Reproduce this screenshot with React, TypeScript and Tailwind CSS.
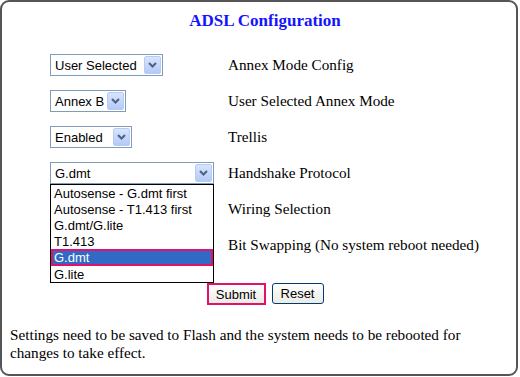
import type { ReactNode } from 'react'

const serif = "font-['Liberation_Serif','Times_New_Roman',serif]"
const sans = "font-['Liberation_Sans',Arial,sans-serif]"

function Chevron() {
  return (
    <svg width="9" height="6" viewBox="0 0 9 6" className="block">
      <path d="M1 1L4.5 4.5L8 1" stroke="#4d6185" strokeWidth="2" fill="none" />
    </svg>
  )
}

// XP style closed select box
function SelectBox({ value, width }: { value: string; width: string }) {
  return (
    <div className={`${width} h-[22px] border border-[#7f9db9] bg-white flex items-center justify-between pl-[4px] pr-[1px] ${sans} text-[13px] text-black`}>
      <span className="leading-none">{value}</span>
      <div className="w-[17px] h-[18px] rounded-[2px] border border-[#b8ccf3] bg-gradient-to-b from-[#d9e5fd] to-[#b4c9f7] flex items-center justify-center">
        <Chevron />
      </div>
    </div>
  )
}

function Row({ children, label }: { children?: ReactNode; label: string }) {
  return (
    <div className="flex items-center h-[36px]">
      <div className="w-[178px] shrink-0 relative">{children}</div>
      <span className={`${serif} text-[15.2px] text-black`}>{label}</span>
    </div>
  )
}

const protocols = [
  'Autosense - G.dmt first',
  'Autosense - T1.413 first',
  'G.dmt/G.lite',
  'T1.413',
  'G.dmt',
  'G.lite',
]

export default function App() {
  return (
    <div className="w-[520px] h-[377px] bg-white">
      <div className="w-[518px] h-[376px] border-2 border-[#555555] rounded-[9px] flex flex-col">
        {/* Title */}
        <div className={`${serif} text-[17px] font-bold text-[#1414ff] text-center pl-[12px] pt-[6px] h-[45px]`}>
          ADSL Configuration
        </div>

        {/* Settings rows */}
        <div className="pl-[48px]">
          <Row label="Annex Mode Config">
            <SelectBox value="User Selected" width="w-[113px]" />
          </Row>
          <Row label="User Selected Annex Mode">
            <SelectBox value="Annex B" width="w-[76px]" />
          </Row>
          <Row label="Trellis">
            <SelectBox value="Enabled" width="w-[82px]" />
          </Row>
          <Row label="Handshake Protocol">
            <SelectBox value="G.dmt" width="w-[164px]" />
            {/* open dropdown list, covers the next two selects */}
            <div className={`absolute left-0 top-[22px] w-[164px] border border-black bg-white z-10 ${sans} text-[13px] text-black`}>
              {protocols.map((p, i) =>
                i === 4 ? (
                  <div key={p} className="h-[17px] border-2 border-[#e0126e] bg-[#316ac5] text-white pl-[1px] flex items-center leading-none">
                    {p}
                  </div>
                ) : (
                  <div key={p} className="h-[16px] pl-[3px] flex items-center leading-none">
                    {p}
                  </div>
                ),
              )}
            </div>
          </Row>
          <Row label="Wiring Selection" />
          <Row label="Bit Swapping (No system reboot needed)" />
        </div>

        {/* Buttons */}
        <div className={`flex justify-center gap-[6px] pl-[12px] mt-[20px] ${sans} text-[13px]`}>
          <button className="w-[59px] h-[22px] border-2 border-[#e0126e] bg-gradient-to-b from-[#fefefe] to-[#ecebe4] text-black leading-none">
            Submit
          </button>
          <button className="w-[52px] h-[21px] border border-[#003c74] rounded-[3px] bg-gradient-to-b from-[#fefefe] to-[#ecebe4] text-black leading-none">
            Reset
          </button>
        </div>

        {/* Footer note */}
        <p className={`${serif} text-[15.2px] leading-[18px] text-black pl-[8px] pr-[40px] mt-[21px]`}>
          Settings need to be saved to Flash and the system needs to be rebooted for changes to take effect.
        </p>
      </div>
    </div>
  )
}
